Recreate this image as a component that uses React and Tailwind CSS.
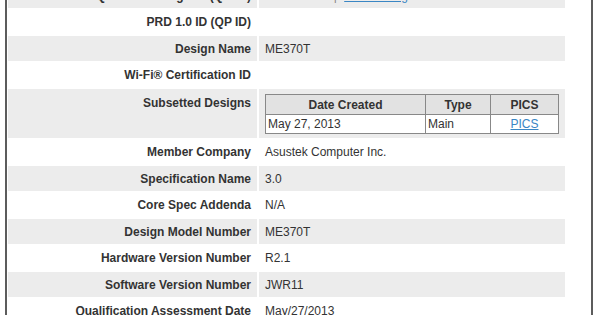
import React from "react";

// listing rows: [label, value, shaded]
const rows = [
  ["Qualified Design ID (QD ID)", "top", true],
  ["PRD 1.0 ID (QP ID)", "", false],
  ["Design Name", "ME370T", true],
  ["Wi-Fi® Certification ID", "", false],
  ["Subsetted Designs", "subsets", true],
  ["Member Company", "Asustek Computer Inc.", false],
  ["Specification Name", "3.0", true],
  ["Core Spec Addenda", "N/A", false],
  ["Design Model Number", "ME370T", true],
  ["Hardware Version Number", "R2.1", false],
  ["Software Version Number", "JWR11", true],
  ["Qualification Assessment Date", "May/27/2013", false],
];

function SubsetTable() {
  return (
    <table className="w-[294px] border-collapse border border-[#666] text-[12px] text-[#333]">
      <thead>
        <tr className="h-[20px] bg-[#e2e2e2]">
          <th className="w-[160px] border border-[#888] font-bold">Date Created</th>
          <th className="w-[65px] border border-[#888] font-bold">Type</th>
          <th className="border border-[#888] font-bold">PICS</th>
        </tr>
      </thead>
      <tbody>
        <tr className="h-[19px] bg-white">
          <td className="border border-[#888] pl-[2px]">May 27, 2013</td>
          <td className="border border-[#888] pl-[2px]">Main</td>
          <td className="border border-[#888] text-center">
            <a className="text-[#3a86c4] underline">PICS</a>
          </td>
        </tr>
      </tbody>
    </table>
  );
}

function Value({ value }) {
  if (value === "subsets") return <SubsetTable />;
  if (value === "top")
    return (
      <span>
        B020931-01 <span className="text-[#888]">|</span>{" "}
        <a className="ml-[4px] text-[#3a86c4] underline">View Listing</a>
      </span>
    );
  return value;
}

export default function App() {
  return (
    <div className="h-[315px] w-[600px] overflow-hidden bg-white font-['Liberation_Sans',Arial,sans-serif] text-[12px] text-[#333]">
      <div className="ml-[5px] -mt-[17px] min-h-[360px] w-[588px] border-x-2 border-[#5c5c5c] pl-px">
        <div className="flex w-[557px] flex-col gap-y-[1.5px]">
          {rows.map(([label, value, shaded]) => {
            const tall = value === "subsets";
            return (
              <div key={label} className={`grid grid-cols-[249px_306px] gap-x-[2px] ${tall ? "h-[49px]" : "h-[25px]"}`}>
                <div
                  className={`flex justify-end pr-[6px] font-bold ${tall ? "items-start pt-[5px]" : "items-center"} ${shaded ? "bg-[#ececec]" : ""}`}
                >
                  {label}
                </div>
                <div
                  className={`flex pl-[6px] ${tall ? "items-start pt-[5px]" : "items-center"} ${shaded ? "bg-[#ececec]" : ""}`}
                >
                  <Value value={value} />
                </div>
              </div>
            );
          })}
        </div>
      </div>
    </div>
  );
}
